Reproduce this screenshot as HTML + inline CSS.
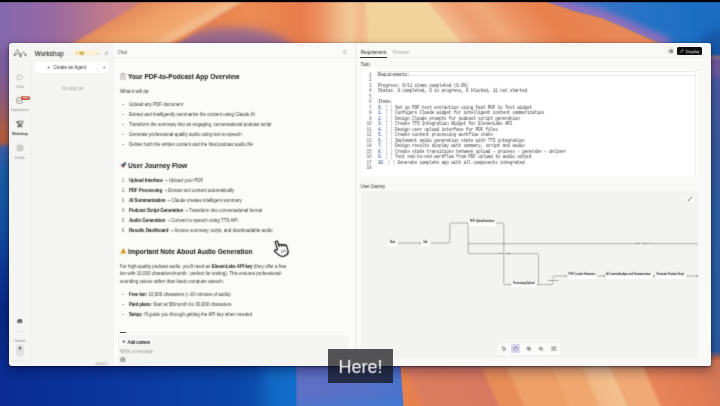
<!DOCTYPE html>
<html lang="en"><head><meta charset="utf-8"><title>Workshop</title>
<style>
*{box-sizing:border-box;margin:0;padding:0}
html,body{width:720px;height:406px;overflow:hidden;background:#123}
body{position:relative;font-family:"Liberation Sans",sans-serif;color:#1c1c1c}
.wall{position:absolute;left:0;top:0}
.a{position:absolute}
.win{position:absolute;left:9px;top:43px;width:702px;height:322.7px;background:#f5f5f3;border-radius:3px;overflow:hidden}
.shadow{position:absolute;left:9px;top:43px;width:702px;height:322.7px;border-radius:3px;box-shadow:0 5px 12px rgba(0,0,40,.38),0 1px 2.5px rgba(0,0,30,.5),0 0 1.2px rgba(0,0,30,.45)}
.nav{position:absolute;left:0;top:0;width:21.5px;height:100%;border-right:.5px solid #f0f0ee}
.chat{position:absolute;left:104px;top:0;width:241.5px;height:100%;background:#fbfbfa;border-left:.5px solid #f3f3f1}
.right{position:absolute;left:345.5px;top:0;width:356.5px;height:100%;background:#f9f9f7;border-left:.5px solid #e9e9e7}
.t{position:absolute;white-space:nowrap;line-height:8px;height:8px;filter:url(#soft)}
.h{font-weight:bold;font-size:6.6px;color:#141414}
.p{font-size:4.5px;color:#333}
.p b{color:#161616;letter-spacing:-.09px}
.ar{font-family:"DejaVu Sans",sans-serif;font-size:4.2px}
.am{font-family:"DejaVu Sans Mono",monospace;font-size:4.05px;letter-spacing:0}
.g{color:#a2a2a0}
.nl{font-size:3.5px;text-align:center;width:21.5px;left:0!important}
.code{font-family:"Liberation Mono",monospace;font-size:4.5px;letter-spacing:-.258px;color:#404040;white-space:pre}
.ln{font-family:"Liberation Mono",monospace;font-size:4.5px;letter-spacing:-.258px;color:#5c5c5c;text-align:right;width:10px}
.node{position:absolute;background:#fff;border-radius:1.9px;font-size:2.55px;text-align:center;color:#2a2a2a;-webkit-text-stroke:.1px #2a2a2a;white-space:nowrap;overflow:hidden;filter:url(#soft)}
.el{position:absolute;font-size:2.1px;line-height:3px;height:3px;color:#555;-webkit-text-stroke:.08px #555;background:#f3f3f1;white-space:nowrap;padding:0 .5px;filter:url(#soft)}
svg{display:block}
svg.a{filter:url(#soft)}
</style></head>
<body>
<svg width="0" height="0" style="position:absolute"><defs><filter id="soft" x="-10%" y="-30%" width="120%" height="160%" color-interpolation-filters="sRGB"><feConvolveMatrix order="3" kernelMatrix="1 3 1 3 18 3 1 3 1" divisor="34" edgeMode="none"/></filter></defs></svg>
<svg class="wall" width="720" height="406" viewBox="0 0 720 406">
<defs>
<filter id="b1" x="-5%" y="-30%" width="110%" height="160%"><feGaussianBlur stdDeviation="1.2"/></filter>
<filter id="b5" x="-50%" y="-50%" width="200%" height="200%"><feGaussianBlur stdDeviation="5"/></filter>
<linearGradient id="gl" x1="0" y1="0" x2="0" y2="1">
 <stop offset="0" stop-color="#8468ac"/>
 <stop offset="0.17" stop-color="#80609f"/>
 <stop offset="0.23" stop-color="#8e5f86"/>
 <stop offset="0.29" stop-color="#a4605c"/>
 <stop offset="0.325" stop-color="#b86040"/>
 <stop offset="0.35" stop-color="#b45e44"/>
 <stop offset="0.365" stop-color="#3e5ea8"/>
 <stop offset="0.42" stop-color="#1a5ea8"/>
 <stop offset="0.56" stop-color="#1452a4"/>
 <stop offset="0.66" stop-color="#0c3898"/>
 <stop offset="0.76" stop-color="#0a2a88"/>
 <stop offset="1" stop-color="#0a2c90"/>
</linearGradient>
<linearGradient id="gr" x1="0" y1="0" x2="0" y2="1">
 <stop offset="0" stop-color="#1c6cc0"/>
 <stop offset="0.10" stop-color="#1a64b4"/>
 <stop offset="0.132" stop-color="#1a62b0"/>
 <stop offset="0.14" stop-color="#c08070"/>
 <stop offset="0.15" stop-color="#7a5a98"/>
 <stop offset="0.18" stop-color="#6a5a9c"/>
 <stop offset="0.20" stop-color="#4a5aa0"/>
 <stop offset="0.35" stop-color="#3a5a9c"/>
 <stop offset="0.55" stop-color="#2c60a4"/>
 <stop offset="0.865" stop-color="#2a5aa0"/>
 <stop offset="0.885" stop-color="#c8683c"/>
 <stop offset="1" stop-color="#d87048"/>
</linearGradient>
<!-- top base, plain horizontal -->
<linearGradient id="gt" gradientUnits="userSpaceOnUse" x1="0" y1="0" x2="720" y2="0">
 <stop offset="0" stop-color="#8468ae"/>
 <stop offset="0.07" stop-color="#9869a4"/>
 <stop offset="0.118" stop-color="#b07490"/>
 <stop offset="0.165" stop-color="#c87c88"/>
 <stop offset="0.21" stop-color="#d08078"/>
 <stop offset="0.30" stop-color="#e8844e"/>
 <stop offset="0.347" stop-color="#ec8c54"/>
 <stop offset="0.417" stop-color="#e87c4c"/>
 <stop offset="0.444" stop-color="#ec9060"/>
 <stop offset="0.465" stop-color="#f0b080"/>
 <stop offset="0.486" stop-color="#f4c898"/>
 <stop offset="0.503" stop-color="#f1b98a"/>
 <stop offset="0.515" stop-color="#f2d39c"/>
 <stop offset="1" stop-color="#f2d39c"/>
</linearGradient>
<!-- top right part, skewed "\" -->
<linearGradient id="gt2" gradientUnits="userSpaceOnUse" x1="0" y1="0" x2="720" y2="0" gradientTransform="skewX(40)">
 <stop offset="0.55" stop-color="#f2d39c"/>
 <stop offset="0.588" stop-color="#f2d39c"/>
 <stop offset="0.592" stop-color="#f2ba8e"/>
 <stop offset="0.63" stop-color="#ee9e70"/>
 <stop offset="0.66" stop-color="#f0a878"/>
 <stop offset="0.70" stop-color="#ec9060"/>
 <stop offset="0.74" stop-color="#e8804c"/>
 <stop offset="0.82" stop-color="#e88858"/>
 <stop offset="1" stop-color="#e88858"/>
</linearGradient>
<!-- orange streak band, skewed "/" -->
<linearGradient id="gs" gradientUnits="userSpaceOnUse" x1="0" y1="0" x2="720" y2="0" gradientTransform="skewX(-60.26)">
 <stop offset="0.19" stop-color="#de8660"/>
 <stop offset="0.225" stop-color="#e8935f"/>
 <stop offset="0.264" stop-color="#f0a068"/>
 <stop offset="0.308" stop-color="#f2a970"/>
 <stop offset="0.325" stop-color="#f4b888"/>
 <stop offset="0.337" stop-color="#f4b888"/>
 <stop offset="0.346" stop-color="#e48456"/>
</linearGradient>
<linearGradient id="gblue" gradientUnits="userSpaceOnUse" x1="540" y1="0" x2="720" y2="0">
 <stop offset="0" stop-color="#5a76c8"/>
 <stop offset="0.35" stop-color="#3474c8"/>
 <stop offset="0.65" stop-color="#2272c6"/>
 <stop offset="1" stop-color="#1c6cc2"/>
</linearGradient>
<clipPath id="cblue"><polygon points="538,-4 548,2 560,5.8 575,10.8 600,16.7 620,25 640,34 655,40.5 668,46 690,50 730,50 730,-4"/></clipPath>
<filter id="b3" x="-20%" y="-50%" width="140%" height="200%"><feGaussianBlur stdDeviation="3.5"/></filter>
<!-- bottom left -->
<linearGradient id="gb" gradientUnits="userSpaceOnUse" x1="0" y1="0" x2="720" y2="0">
 <stop offset="0" stop-color="#0a2c92"/>
 <stop offset="0.20" stop-color="#0b3aa0"/>
 <stop offset="0.33" stop-color="#0b46a8"/>
 <stop offset="0.355" stop-color="#0c4eae"/>
 <stop offset="0.375" stop-color="#1266c2"/>
 <stop offset="0.411" stop-color="#1070cc"/>
 <stop offset="0.4125" stop-color="#6070c4"/>
 <stop offset="0.50" stop-color="#5670c6"/>
 <stop offset="0.557" stop-color="#4a74cc"/>
 <stop offset="1" stop-color="#4a74cc"/>
</linearGradient>
<linearGradient id="gbv" x1="0" y1="0" x2="0" y2="1">
 <stop offset="0" stop-color="#5050a0" stop-opacity=".35"/>
 <stop offset="0.5" stop-color="#5868c0" stop-opacity="0"/>
 <stop offset="1" stop-color="#2a84e0" stop-opacity=".45"/>
</linearGradient>
<!-- bottom right, skewed "\" -->
<linearGradient id="gb2" gradientUnits="userSpaceOnUse" x1="0" y1="0" x2="720" y2="0" gradientTransform="translate(-165 0) skewX(24.2)">
 <stop offset="0.556" stop-color="#e8804c"/>
 <stop offset="0.568" stop-color="#dc7c5e"/>
 <stop offset="0.665" stop-color="#d87860"/>
 <stop offset="0.672" stop-color="#e88c58"/>
 <stop offset="0.70" stop-color="#e88c58"/>
 <stop offset="0.707" stop-color="#eea068"/>
 <stop offset="0.763" stop-color="#eea068"/>
 <stop offset="0.77" stop-color="#f0a870"/>
 <stop offset="0.805" stop-color="#f0a870"/>
 <stop offset="0.812" stop-color="#f2b884"/>
 <stop offset="0.844" stop-color="#f4c090"/>
 <stop offset="0.85" stop-color="#f0a874"/>
 <stop offset="0.89" stop-color="#f0a874"/>
 <stop offset="0.897" stop-color="#e88458"/>
 <stop offset="0.96" stop-color="#e07c54"/>
 <stop offset="1" stop-color="#d07658"/>
</linearGradient>
</defs>
<rect width="720" height="406" fill="#7888a8"/>
<rect x="0" y="0" width="30" height="406" fill="url(#gl)"/>
<rect x="690" y="0" width="30" height="406" fill="url(#gr)"/>
<!-- top strip -->
<rect x="0" y="-4" width="400" height="52" fill="url(#gt)"/>
<rect x="400" y="-4" width="320" height="52" fill="url(#gt2)"/>
<ellipse cx="232" cy="52" rx="62" ry="24" fill="#8a6498" opacity=".85" filter="url(#b5)"/>
<g filter="url(#b1)">
<polygon points="62,50 152,-4 256,-4 166,50" fill="url(#gs)"/>
<polygon points="366,-4 423,-4 465,48 371,48" fill="#f2d39c"/>
<polygon points="538,-4 548,2 560,5.8 575,10.8 600,16.7 620,25 640,34 655,40.5 668,46 690,50 730,50 730,-4" fill="url(#gblue)"/>
</g>
<g clip-path="url(#cblue)"><path d="M538,-4 L548,2 L560,5.8 L575,10.8 L600,16.7 L620,25 L640,34 L655,40.5 L668,46" fill="none" stroke="#9070bc" stroke-width="15" filter="url(#b3)"/></g>
<ellipse cx="722" cy="44" rx="22" ry="14" fill="#18509c" opacity=".7" filter="url(#b5)"/>
<!-- bottom strip -->
<rect x="0" y="360" width="403" height="50" fill="url(#gb)"/>
<rect x="297" y="360" width="106" height="50" fill="url(#gbv)"/>
<polygon points="400,360 720,360 720,410 404,410" fill="url(#gb2)"/>
<rect x="0" y="0" width="720" height="2.15" fill="#000"/>
</svg>
<div class="shadow"></div>
<div class="win">
<div class="nav"></div>
<div class="chat"></div>
<div class="right"></div>
<svg class="a" style="left:4px;top:4.5px" width="14" height="10" viewBox="13 47.5 14 10" fill="none" stroke="#3a3a3a" stroke-width=".5" stroke-linecap="round" stroke-linejoin="round"><path d="M14.5 54.6 L17.5 48.9 L20.4 55.6 L23.4 51.3 L25.4 54.4"/><path d="M15.9 53.5 Q18.5 52.8 21.6 53.6"/><circle cx="14.5" cy="54.6" r=".5" fill="#2a2a2a"/><circle cx="20.4" cy="55.7" r=".5" fill="#2a2a2a"/><circle cx="25.4" cy="54.4" r=".5" fill="#2a2a2a"/></svg>
<div class="t h" style="left:25.8px;top:6.6px;font-size:6.3px;letter-spacing:.12px;font-weight:normal;-webkit-text-stroke:.08px #1d1d1d;color:#1d1d1d">Workshop</div>
<div class="a" style="left:64.7px;top:7.3px;width:25.7px;height:5.1px;background:#fdf6e0;border-radius:1.4px;box-shadow:0 0 0 .3px #f9ecc6"></div>
<svg class="a" style="left:66px;top:8px" width="3.2" height="3.8" viewBox="0 0 8 10" fill="none" stroke="#d6a83c" stroke-width=".9" stroke-linejoin="round"><path d="M4.6 .8 L1.2 5.6 L3.8 5.6 L3.2 9.2 L6.8 4.2 L4.2 4.2 Z"/></svg>
<div class="a" style="left:70.2px;top:8.2px;width:15.6px;height:3.4px;background:#fcf1d2;border-radius:.8px"></div>
<div class="a" style="left:70.2px;top:8.2px;width:4.4px;height:3.4px;background:#ecd088;border-radius:.8px"></div>
<div class="t p" style="left:71.0px;top:6.5px;font-size:2.8px;color:#8a6c22">5%</div>
<div class="t p" style="left:87.2px;top:6.3px;font-size:4.2px;color:#8f96a8">+</div>
<svg class="a" style="left:94.6px;top:7.600000000000001px" width="4.6" height="4.8" viewBox="0 0 12 12" fill="none" stroke="#9a9a98" stroke-width="1.3" stroke-linecap="round"><path d="M7 1.5 L10.5 5 M8 2.5 L4.5 5 L3 5 L7 9 L7 7.5 L9.5 4 M5 7 L1.8 10.2"/></svg>
<div class="a" style="left:25.8px;top:19.3px;width:74.4px;height:10.4px;background:#fff;border-radius:1.5px"></div>
<div class="a" style="left:88.4px;top:19.3px;width:0.5px;height:10.4px;background:#f3f3f1"></div>
<div class="t p" style="left:38.2px;top:19.8px;font-size:5.4px;color:#333">+</div>
<div class="t p" style="left:44.6px;top:21.3px;font-size:4.5px;color:#2a2a2a">Create an Agent</div>
<svg class="a" style="left:93.5px;top:23.599999999999994px" width="2.8" height="1.6" viewBox="0 0 7 4"><path d="M0 0 L7 0 L3.5 4 Z" fill="#444"/></svg>
<div class="t p g" style="left:52.6px;top:41.8px;font-size:4.5px;color:#a0a09e;transform:scaleX(.885);transform-origin:0 50%">No apps yet</div>
<svg class="a" style="left:7.199999999999999px;top:30.599999999999994px" width="7.2" height="7.2" viewBox="0 0 16 16" fill="none" stroke="#8c8c8a" stroke-width="1.1"><path d="M8 2.2 C4.3 2.2 1.8 4.2 1.8 7 C1.8 8.6 2.7 9.9 4 10.7 L3.2 13.4 L6.2 11.6 C6.8 11.7 7.4 11.8 8 11.8 C11.7 11.8 14.2 9.8 14.2 7 C14.2 4.2 11.7 2.2 8 2.2 Z"/></svg>
<div class="t nl" style="top:40.4px;color:#9e9e9c;-webkit-text-stroke:.09px #9e9e9c">Chat</div>
<svg class="a" style="left:7.300000000000001px;top:54.400000000000006px" width="7" height="7" viewBox="0 0 14 14" fill="none" stroke="#5a5a58" stroke-width="1.1"><rect x="1.2" y="1.2" width="11.6" height="11.6" rx="3"/><path d="M5.2 5.6 L5.2 8 Q7 10.2 8.8 8 L8.8 5.6"/></svg>
<div class="a" style="left:12.2px;top:53.2px;width:8.6px;height:3.8px;background:#bd4b33;border-radius:1.6px"></div>
<div class="t p" style="left:13.5px;top:52.2px;font-size:2.6px;color:#f6d9cf;font-weight:bold;letter-spacing:.05px">NEW</div>
<div class="t nl" style="top:63.0px;color:#9e9e9c;-webkit-text-stroke:.09px #9e9e9c">Inspirations</div>
<svg class="a" style="left:6.9px;top:77.3px" width="7.8" height="7.8" viewBox="0 0 24 24" fill="none" stroke="#262626" stroke-width="2" stroke-linejoin="round" stroke-linecap="round"><path d="M7 10H6a4 4 0 0 1-4-4 1 1 0 0 1 1-1h4"/><path d="M7 5a1 1 0 0 1 1-1h13a1 1 0 0 1 1 1 7 7 0 0 1-7 7H8a1 1 0 0 1-1-1z"/><path d="M9 12v5"/><path d="M15 12v5"/><path d="M5 20a3 3 0 0 1 3-3h8a3 3 0 0 1 3 3 1 1 0 0 1-1 1H6a1 1 0 0 1-1-1"/></svg>
<div class="t nl" style="top:87.4px;color:#2a2a2a;-webkit-text-stroke:.09px #2a2a2a">Workshop</div>
<svg class="a" style="left:7px;top:101px" width="7.6" height="7.6" viewBox="0 0 24 24" fill="none" stroke="#8c8c8a" stroke-width="1.7" stroke-linecap="round"><path d="M18 20a6 6 0 0 0-12 0"/><circle cx="12" cy="10" r="4"/><circle cx="12" cy="12" r="10"/></svg>
<div class="t nl" style="top:111.0px;color:#9e9e9c;-webkit-text-stroke:.09px #9e9e9c">Profile</div>
<svg class="a" style="left:7.899999999999999px;top:276.2px" width="5.6" height="4.4" viewBox="0 0 14 11"><path d="M2.6 1 C4 0.3 5 0.2 5.4 0.2 L5.8 1 C6.6 0.9 7.4 0.9 8.2 1 L8.6 0.2 C9 0.2 10 0.3 11.4 1 C12.8 3.2 13.6 6 13.3 8.8 C12 9.9 10.8 10.4 9.8 10.6 L9 9.4 C9.6 9.2 10 9 10.4 8.7 L10.1 8.5 C8.2 9.4 5.8 9.4 3.9 8.5 L3.6 8.7 C4 9 4.4 9.2 5 9.4 L4.2 10.6 C3.2 10.4 2 9.9 0.7 8.8 C0.4 6 1.2 3.2 2.6 1 Z M4.9 7.2 C5.6 7.2 6.1 6.6 6.1 5.9 C6.1 5.2 5.6 4.6 4.9 4.6 C4.2 4.6 3.7 5.2 3.7 5.9 C3.7 6.6 4.2 7.2 4.9 7.2 Z M9.1 7.2 C9.8 7.2 10.3 6.6 10.3 5.9 C10.3 5.2 9.8 4.6 9.1 4.6 C8.4 4.6 7.9 5.2 7.9 5.9 C7.9 6.6 8.4 7.2 9.1 7.2 Z" fill="#4a4a4a" fill-rule="evenodd"/></svg>
<div class="a" style="left:6.9px;top:288.1px;width:8.0px;height:0.4px;background:#e6e6e4"></div>
<div class="t nl" style="top:293.5px;color:#6e6e6c;font-size:3.5px">Classic</div>
<div class="a" style="left:7.2px;top:301.4px;width:7.6px;height:12.2px;background:#e3e3e1;border-radius:3.8px"></div>
<div class="a" style="left:7.7px;top:301.9px;width:6.6px;height:6.6px;background:#fff;border-radius:3.3px;box-shadow:0 .3px .8px rgba(0,0,0,.25)"></div>
<svg class="a" style="left:9px;top:303.2px" width="4" height="4" viewBox="0 0 10 10"><circle cx="5" cy="5" r="4.2" fill="#4a4a4a"/><path d="M3 5.2 L5 3 L7 5.2 M5 3.4 L5 7.4" stroke="#fff" stroke-width="1" fill="none"/></svg>
<div class="t nl" style="top:314.3px;color:#d6d6d4;font-size:3.4px;width:40px;left:0!important;text-align:left;padding-left:2.4px">Launched</div>
<div class="t p" style="left:86.5px;top:316.8px;font-size:3.3px;color:#6a6a68">v1.0.5</div>
<svg class="a" style="left:96.3px;top:317.7px" width="3" height="4.2" viewBox="0 0 7 10" fill="none" stroke="#777" stroke-width="1"><path d="M1 3.6 L3.5 1 L6 3.6 M1 6.4 L3.5 9 L6 6.4"/></svg>
<div class="t p" style="left:108.5px;top:6.3px;font-size:4.5px;color:#555">Chat</div>
<div class="a" style="left:104.5px;top:13.7px;width:241.0px;height:0.4px;background:#efefed"></div>
<svg class="a" style="left:333.6px;top:7.200000000000003px" width="4.6" height="4" viewBox="0 0 12 10" fill="none" stroke="#8e8e8c" stroke-width="1"><rect x=".8" y=".8" width="10.4" height="8.4" rx="1.6"/><path d="M4.4 1 L4.4 9"/></svg>
<svg class="a" style="left:111px;top:29.799999999999997px" width="6" height="7" viewBox="0 0 12 14"><rect x=".8" y="1.4" width="10.4" height="12" rx="1.3" fill="#e4e2de" stroke="#a9a6a0" stroke-width=".9"/><rect x="3.6" y=".4" width="4.8" height="2.4" rx=".8" fill="#8f8c88"/><path d="M3 6 L9 6 M3 8.2 L9 8.2 M3 10.4 L7.4 10.4" stroke="#b8b5b0" stroke-width=".8"/></svg>
<div class="t h" style="left:119.1px;top:30.3px;">Your PDF-to-Podcast App Overview</div>
<div class="t p" style="left:111.0px;top:45.0px;font-size:4.6px;color:#2e2e2e">What it will do:</div>
<div class="a" style="left:113.1px;top:61.0px;width:1.6px;height:0.5px;background:#c0c0be"></div>
<div class="t p" style="left:119.9px;top:58.3px;">Upload any PDF document</div>
<div class="a" style="left:113.1px;top:71.0px;width:1.6px;height:0.5px;background:#c0c0be"></div>
<div class="t p" style="left:119.9px;top:68.2px;">Extract and intelligently summarize the content using Claude AI</div>
<div class="a" style="left:113.1px;top:80.8px;width:1.6px;height:0.5px;background:#c0c0be"></div>
<div class="t p" style="left:119.9px;top:78.0px;">Transform the summary into an engaging, conversational podcast script</div>
<div class="a" style="left:113.1px;top:90.7px;width:1.6px;height:0.4px;background:#c0c0be"></div>
<div class="t p" style="left:119.9px;top:87.9px;">Generate professional-quality audio using text-to-speech</div>
<div class="a" style="left:113.1px;top:100.5px;width:1.6px;height:0.4px;background:#c0c0be"></div>
<div class="t p" style="left:119.9px;top:97.8px;">Deliver both the written content and the final podcast audio file</div>
<svg class="a" style="left:110.6px;top:119.30000000000001px" width="6.6" height="6.6" viewBox="0 0 14 14"><path d="M12.8 1.2 C9.6 1 6.8 2.4 5 5.2 L3.2 8 L6 10.8 L8.8 9 C11.6 7.2 13 4.4 12.8 1.2 Z" fill="#4a4c58" stroke="#2e303a" stroke-width=".7"/><path d="M5.2 5 L2.2 5.4 L.8 7.4 L3.4 7.8 Z M9 8.8 L8.6 11.8 L6.6 13.2 L6.2 10.6 Z" fill="#d2503c"/><circle cx="9.4" cy="4.6" r="1.3" fill="#9cc4e8"/><path d="M3.4 10.6 C2.2 10.8 1.4 11.8 1.2 12.8 C2.2 12.6 3.2 11.8 3.4 10.6 Z" fill="#f0a030"/></svg>
<div class="t h" style="left:119.1px;top:118.9px;">User Journey Flow</div>
<div class="t p" style="left:112.8px;top:134.2px;color:#6c6c6a;font-size:4.5px">1.</div>
<div class="t p" style="left:119.9px;top:134.2px;"><b>Upload Interface</b> <span class="ar">→</span> Upload your PDF</div>
<div class="t p" style="left:112.8px;top:144.1px;color:#6c6c6a;font-size:4.5px">2.</div>
<div class="t p" style="left:119.9px;top:144.1px;"><b>PDF Processing</b> <span class="ar">→</span> Extract text content automatically</div>
<div class="t p" style="left:112.8px;top:153.9px;color:#6c6c6a;font-size:4.5px">3.</div>
<div class="t p" style="left:119.9px;top:153.9px;"><b>AI Summarization</b> <span class="ar">→</span> Claude creates intelligent summary</div>
<div class="t p" style="left:112.8px;top:163.8px;color:#6c6c6a;font-size:4.5px">4.</div>
<div class="t p" style="left:119.9px;top:163.8px;"><b>Podcast Script Generation</b> <span class="ar">→</span> Transform into conversational format</div>
<div class="t p" style="left:112.8px;top:173.7px;color:#6c6c6a;font-size:4.5px">5.</div>
<div class="t p" style="left:119.9px;top:173.7px;"><b>Audio Generation</b> <span class="ar">→</span> Convert to speech using TTS API</div>
<div class="t p" style="left:112.8px;top:183.6px;color:#6c6c6a;font-size:4.5px">6.</div>
<div class="t p" style="left:119.9px;top:183.6px;"><b>Results Dashboard</b> <span class="ar">→</span> Access summary, script, and downloadable audio</div>
<svg class="a" style="left:110.8px;top:204.8px" width="6.6" height="6" viewBox="0 0 14 13"><path d="M7 .8 L13.4 12 L.6 12 Z" fill="#f5b73a" stroke="#e09a1c" stroke-width=".7" stroke-linejoin="round"/><path d="M7 4.6 L7 8.4" stroke="#3a2a10" stroke-width="1.3" stroke-linecap="round"/><circle cx="7" cy="10.2" r=".8" fill="#3a2a10"/></svg>
<div class="t h" style="left:119.1px;top:204.6px;">Important Note About Audio Generation</div>
<div class="t p" style="left:111.0px;top:219.9px;">For high-quality podcast audio, you'll need an <b>ElevenLabs API key</b> (they offer a free</div>
<div class="t p" style="left:111.0px;top:227.3px;">tier with 10,000 characters/month - perfect for testing). This ensures professional-</div>
<div class="t p" style="left:111.0px;top:234.8px;">sounding voices rather than basic computer speech.</div>
<div class="a" style="left:113.1px;top:251.1px;width:1.6px;height:0.4px;background:#c0c0be"></div>
<div class="t p" style="left:119.9px;top:248.3px;"><b>Free tier:</b> 10,000 characters (~10 minutes of audio)</div>
<div class="a" style="left:113.1px;top:260.9px;width:1.6px;height:0.4px;background:#c0c0be"></div>
<div class="t p" style="left:119.9px;top:258.1px;"><b>Paid plans:</b> Start at $5/month for 30,000 characters</div>
<div class="a" style="left:113.1px;top:270.9px;width:1.6px;height:0.4px;background:#c0c0be"></div>
<div class="t p" style="left:119.9px;top:268.2px;"><b>Setup:</b> I'll guide you through getting the API key when needed</div>
<div class="a" style="left:111.0px;top:289.0px;width:6.2px;height:0.6px;background:#555"></div>
<div class="a" style="left:109.3px;top:292.3px;width:231.2px;height:30.7px;background:#f4f4f2;border-radius:2.4px 2.4px 0 0"></div>
<div class="a" style="left:111.3px;top:295.7px;width:31.4px;height:6.0px;background:#fff;border-radius:1.2px"></div>
<svg class="a" style="left:113.3px;top:296.9px" width="3.6" height="3.6" viewBox="0 0 8 8" fill="none" stroke="#3a3a3a" stroke-width="1"><circle cx="4" cy="4" r="3.2"/><circle cx="4" cy="4" r="1.2"/><path d="M5.2 4 Q5.4 5.4 6.6 5"/></svg>
<div class="t p" style="left:118.6px;top:295.8px;font-size:4.5px;letter-spacing:-.13px;color:#2a2a2a;-webkit-text-stroke:.14px #2a2a2a">Add context</div>
<div class="t p" style="left:111.0px;top:305.2px;font-size:4.5px;letter-spacing:-.04px;color:#9c9c9a">Write a message</div>
<svg class="a" style="left:111.3px;top:313.6px" width="5.4" height="5.4" viewBox="0 0 12 12" fill="none" stroke="#222" stroke-width="1.25"><circle cx="6" cy="6" r="4.8"/><path d="M3.8 6 L8.2 6 M6.6 4.2 L8.4 6 L6.6 7.8"/></svg>
<div class="t p" style="left:351.8px;top:6.3px;font-size:4.5px;letter-spacing:-.03px;color:#222">Requirement</div>
<div class="t p" style="left:384.0px;top:6.3px;font-size:4.5px;letter-spacing:-.03px;color:#a6a6a4">Preview</div>
<div class="a" style="left:346.0px;top:14.3px;width:356.0px;height:0.4px;background:#f0f0ee"></div>
<div class="a" style="left:351.3px;top:14.0px;width:26.3px;height:0.7px;background:#333"></div>
<div class="a" style="left:658.4px;top:4.4px;width:6.8px;height:6.8px;background:#efefed;border-radius:1.3px"></div>
<svg class="a" style="left:659.7px;top:5.600000000000001px" width="4.4" height="4.4" viewBox="0 0 10 10"><circle cx="5" cy="5" r="4.6" fill="#828280"/><path d="M3 4 L7 4 M3 6 L7 6" stroke="#e8e8e6" stroke-width=".8"/></svg>
<div class="a" style="left:668.0px;top:4.3px;width:25.0px;height:7.4px;background:#0c0c0c;border-radius:1.6px"></div>
<svg class="a" style="left:671.1px;top:6.200000000000003px" width="3.8" height="3.8" viewBox="0 0 10 10" fill="none" stroke="#fff" stroke-width="1"><path d="M8.8 1.2 C6 1 4 2.4 2.8 4.6 L5.4 7.2 C7.6 6 9 4 8.8 1.2 Z M2.6 6 L1.2 8.8 L4 7.4"/></svg>
<div class="t p" style="left:676.8px;top:5.1px;font-size:4.2px;color:#fff;letter-spacing:.12px">Deploy</div>
<div class="t p" style="left:351.6px;top:17.6px;font-size:4.5px;letter-spacing:-.2px;color:#333">Todo</div>
<div class="a" style="left:351.5px;top:25.6px;width:337.4px;height:107.2px;background:#fdfdfc"></div>
<div class="a" style="left:351.5px;top:25.6px;width:334.9px;height:107.2px;background:#fff"></div>
<div class="a" style="left:368.2px;top:27.8px;width:318.4px;height:5.7px;border:.5px solid #e9e9e7"></div>
<div class="a" style="left:686.4px;top:25.6px;width:0.4px;height:107.2px;background:#efefed"></div>
<svg class="a" style="left:686.7px;top:26px" width="2" height="1.4" viewBox="0 0 5 3.5"><path d="M0 3.5 L2.5 0 L5 3.5 Z" fill="#9a9a98"/></svg>
<div class="t ln" style="left:352.5px;top:27.7px">1</div><div class="t code" style="left:368.9px;top:27.7px">Requirements:</div>
<div class="t ln" style="left:352.5px;top:33.2px">2</div>
<div class="t ln" style="left:352.5px;top:38.7px">3</div><div class="t code" style="left:368.9px;top:38.7px">Progress: 0/11 items completed (0.0%)</div>
<div class="t ln" style="left:352.5px;top:44.2px">4</div><div class="t code" style="left:368.9px;top:44.2px">Status: 0 completed, 0 in progress, 0 blocked, 11 not started</div>
<div class="t ln" style="left:352.5px;top:49.7px">5</div>
<div class="t ln" style="left:352.5px;top:55.2px">6</div><div class="t code" style="left:368.9px;top:55.2px">Items:</div>
<div class="t ln" style="left:352.5px;top:60.7px">7</div><div class="t code" style="left:368.9px;top:60.7px"><span style="color:#26406e">0.</span><span style="color:#9a9a9a"> [ ]</span> Set up PDF text extraction using Fast PDF to Text widget</div>
<div class="t ln" style="left:352.5px;top:66.2px">8</div><div class="t code" style="left:368.9px;top:66.2px"><span style="color:#26406e">1.</span><span style="color:#9a9a9a"> [ ]</span> Configure Claude widget for intelligent content summarization</div>
<div class="t ln" style="left:352.5px;top:71.7px">9</div><div class="t code" style="left:368.9px;top:71.7px"><span style="color:#26406e">2.</span><span style="color:#9a9a9a"> [ ]</span> Design Claude prompts for podcast script generation</div>
<div class="t ln" style="left:352.5px;top:77.2px">10</div><div class="t code" style="left:368.9px;top:77.2px"><span style="color:#26406e">3.</span><span style="color:#9a9a9a"> [ ]</span> Create TTS Integration Widget for ElevenLabs API</div>
<div class="t ln" style="left:352.5px;top:82.7px">11</div><div class="t code" style="left:368.9px;top:82.7px"><span style="color:#26406e">4.</span><span style="color:#9a9a9a"> [ ]</span> Design user upload interface for PDF files</div>
<div class="t ln" style="left:352.5px;top:88.2px">12</div><div class="t code" style="left:368.9px;top:88.2px"><span style="color:#26406e">5.</span><span style="color:#9a9a9a"> [ ]</span> Create content processing workflow state</div>
<div class="t ln" style="left:352.5px;top:93.7px">13</div><div class="t code" style="left:368.9px;top:93.7px"><span style="color:#26406e">6.</span><span style="color:#9a9a9a"> [ ]</span> Implement audio generation state with TTS integration</div>
<div class="t ln" style="left:352.5px;top:99.2px">14</div><div class="t code" style="left:368.9px;top:99.2px"><span style="color:#26406e">7.</span><span style="color:#9a9a9a"> [ ]</span> Design results display with summary, script and audio</div>
<div class="t ln" style="left:352.5px;top:104.7px">15</div><div class="t code" style="left:368.9px;top:104.7px"><span style="color:#26406e">8.</span><span style="color:#9a9a9a"> [ ]</span> Create state transitions between upload <span class="am">→</span> process <span class="am">→</span> generate <span class="am">→</span> deliver</div>
<div class="t ln" style="left:352.5px;top:110.2px">16</div><div class="t code" style="left:368.9px;top:110.2px"><span style="color:#26406e">9.</span><span style="color:#9a9a9a"> [ ]</span> Test end-to-end workflow from PDF upload to audio output</div>
<div class="t ln" style="left:352.5px;top:115.7px">17</div><div class="t code" style="left:368.9px;top:115.7px"><span style="color:#26406e">10.</span><span style="color:#9a9a9a"> [ ]</span> Generate complete app with all components integrated</div>
<div class="t ln" style="left:352.5px;top:121.3px">18</div>
<div class="t p" style="left:351.6px;top:139.9px;font-size:4.5px;letter-spacing:-.2px;color:#333">User Journey</div>
<div class="a" style="left:351.5px;top:147.6px;width:337.3px;height:167.8px;background:#f3f3f1;border-radius:1px"></div>
<svg class="a" style="left:351.5px;top:147.6px" width="337.3" height="167.8" viewBox="0 0 337.3 167.8" fill="none" stroke="#606060" stroke-width=".48"><path d="M36.7 52.0 L60.5 52.0"/><path d="M69.5 52.0 L87.3 52.0 Q88.8 52.0 88.8 50.5 L88.8 33.5 Q88.8 32.0 90.3 32.0 L107.9 32.0"/><path d="M135.3 32.0 L141.3 32.0 Q142.8 32.0 142.8 33.5 L142.8 92.1 Q142.8 93.6 144.3 93.6 L150.6 93.6"/><path d="M107.2 32.0 L107.2 61.2 Q107.2 62.7 108.7 62.7 L176.0 62.7 Q177.5 62.7 177.5 64.2 L177.5 93.6"/><path d="M107.2 52.7 L337.3 52.7"/><path d="M175.8 93.6 L190.4 93.6 Q191.9 93.6 191.9 92.1 L191.9 86.5 Q191.9 85.0 193.4 85.0 L206.9 85.0"/><path d="M236.1 85.0 L244.4 85.0"/><path d="M291.4 85.0 L294.6 85.0"/><path d="M325.3 85.0 L337.3 85.0"/><path d="M59.2 51.1 L60.6 52.0 L59.2 52.9 Z" fill="#555" stroke="none"/><path d="M106.7 31.1 L108.1 32.0 L106.7 32.9 Z" fill="#555" stroke="none"/><path d="M149.2 92.7 L150.6 93.6 L149.2 94.5 Z" fill="#555" stroke="none"/><path d="M205.6 84.1 L207.0 85.0 L205.6 85.9 Z" fill="#555" stroke="none"/><path d="M243.0 84.1 L244.4 85.0 L243.0 85.9 Z" fill="#555" stroke="none"/><path d="M293.2 84.1 L294.6 85.0 L293.2 85.9 Z" fill="#555" stroke="none"/><path d="M335.7 84.1 L337.1 85.0 L335.7 85.9 Z" fill="#555" stroke="none"/></svg>
<div class="node" style="left:378.9px;top:196.5px;width:9.3px;height:6.4px;line-height:6.4px">Start</div>
<div class="node" style="left:412.1px;top:196.5px;width:8.8px;height:6.4px;line-height:6.4px">Idle</div>
<div class="node" style="left:459.4px;top:176.3px;width:27.5px;height:6.6px;line-height:6.6px">PDF Upload Interface</div>
<div class="node" style="left:502.1px;top:238.1px;width:25.2px;height:6.4px;line-height:6.4px">Processing Upload</div>
<div class="node" style="left:558.3px;top:229.4px;width:29.3px;height:6.6px;line-height:6.6px">PDF Content Extraction</div>
<div class="node" style="left:595.9px;top:229.4px;width:47.0px;height:6.6px;line-height:6.6px">AI Content Analysis and Summarization</div>
<div class="node" style="left:646.1px;top:229.4px;width:30.7px;height:6.6px;line-height:6.6px">Generate Podcast Script</div>
<div class="el" style="left:624.2px;top:198.8px;width:19.5px;text-align:center">Upload Another PDF</div>
<div class="el" style="left:487.8px;top:208.8px;width:12px;text-align:center">Upload Failed</div>
<div class="el" style="left:539.1px;top:235.8px;width:8.5px;text-align:center">Upload OK</div>
<div class="a" style="left:677.7px;top:152.8px;width:6.4px;height:6.4px;background:#fff;border-radius:.8px"></div>
<svg class="a" style="left:678.9px;top:154px" width="4" height="4" viewBox="0 0 10 10" fill="none" stroke="#333" stroke-width="1.1" stroke-linecap="round"><path d="M1.2 8.8 L8.8 1.2 M5.8 1.2 L8.8 1.2 L8.8 4.2 M1.2 5.8 L1.2 8.8 L4.2 8.8"/></svg>
<div class="a" style="left:489.3px;top:299.8px;width:61.9px;height:11.8px;background:#fafaf9;border-radius:1.2px"></div>
<div class="a" style="left:502.2px;top:301.0px;width:9.3px;height:9.3px;background:#dcd8f0;border-radius:1.2px"></div>
<svg class="a" style="left:492.2px;top:302.8px" width="5.7" height="5.7" viewBox="0 0 12 12" fill="none" stroke="#333" stroke-width=".95" stroke-linecap="round" stroke-linejoin="round"><path d="M2.6 1.8 L5.2 10 L6.6 6.8 L9.8 5.4 Z"/><path d="M7.4 7.6 L10 10.2"/></svg>
<svg class="a" style="left:504.0px;top:302.8px" width="5.7" height="5.7" viewBox="0 0 12 12" fill="none" stroke="#333" stroke-width=".95" stroke-linecap="round" stroke-linejoin="round"><path d="M3.4 6.6 L3.4 3.6 Q3.4 2.8 4.1 2.8 Q4.8 2.8 4.8 3.6 L4.8 2.6 Q4.8 1.8 5.5 1.8 Q6.2 1.8 6.2 2.6 L6.2 3 Q6.2 2.2 6.9 2.2 Q7.6 2.2 7.6 3 L7.6 3.8 Q7.6 3.2 8.3 3.2 Q9 3.2 9 4 L9 7.4 Q9 10.4 6.4 10.4 Q4.4 10.4 3.4 8.8 L2 6.6 Q1.8 5.8 2.4 5.6 Q3 5.5 3.4 6.6" fill="#fff" stroke="#2e2a50"/></svg>
<svg class="a" style="left:516.9px;top:302.8px" width="5.7" height="5.7" viewBox="0 0 12 12" fill="none" stroke="#333" stroke-width=".95" stroke-linecap="round" stroke-linejoin="round"><circle cx="5.4" cy="5.4" r="3.4"/><path d="M8 8 L10.4 10.4 M3.9 5.4 L6.9 5.4 M5.4 3.9 L5.4 6.9"/></svg>
<svg class="a" style="left:528.8px;top:302.8px" width="5.7" height="5.7" viewBox="0 0 12 12" fill="none" stroke="#333" stroke-width=".95" stroke-linecap="round" stroke-linejoin="round"><circle cx="5.4" cy="5.4" r="3.4"/><path d="M8 8 L10.4 10.4 M3.9 5.4 L6.9 5.4"/></svg>
<svg class="a" style="left:542.0px;top:302.8px" width="5.7" height="5.7" viewBox="0 0 12 12" fill="none" stroke="#333" stroke-width=".95" stroke-linecap="round" stroke-linejoin="round"><path d="M1.6 4 L1.6 1.6 L4 1.6 M8 1.6 L10.4 1.6 L10.4 4 M10.4 8 L10.4 10.4 L8 10.4 M4 10.4 L1.6 10.4 L1.6 8"/><rect x="4" y="4" width="4" height="4" rx=".8"/></svg>
</div>
<svg class="a" style="left:269.5px;top:237.7px;overflow:visible" width="20" height="22" viewBox="0 0 20 22"><g transform="translate(1.2 .2) rotate(-17 8 10) scale(1.14)"><path d="M5.2 9.6 L5.2 3.4 Q5.2 2.2 6.3 2.2 Q7.4 2.2 7.4 3.4 L7.4 7.4 L7.4 6.8 Q7.4 5.8 8.5 5.8 Q9.6 5.8 9.6 6.9 L9.6 7.6 Q9.6 6.6 10.7 6.6 Q11.8 6.6 11.8 7.7 L11.8 8.4 Q11.8 7.5 12.8 7.5 Q13.8 7.5 13.8 8.6 L13.8 12.4 Q13.8 16.6 9.8 16.6 L8.6 16.6 Q6.4 16.6 5.2 14.6 L2.6 10.8 Q2 9.8 2.8 9.3 Q3.6 8.9 4.3 9.8 Z" fill="#fff" stroke="#111" stroke-width="1.05" stroke-linejoin="round"/><path d="M8.2 11 L8.2 13.8 M9.8 11 L9.8 13.8 M11.4 11 L11.4 13.8" stroke="#8a8a8a" stroke-width=".8"/></g></svg>
<div class="a" style="left:328px;top:349px;width:65px;height:33.7px;background:rgba(14,14,18,.7)"></div><div class="a" style="left:328px;top:350.5px;width:65px;height:33.7px;line-height:33.2px;text-align:center;color:#fff;font-size:18px;letter-spacing:0;filter:url(#soft)">Here!</div>
</body></html>
